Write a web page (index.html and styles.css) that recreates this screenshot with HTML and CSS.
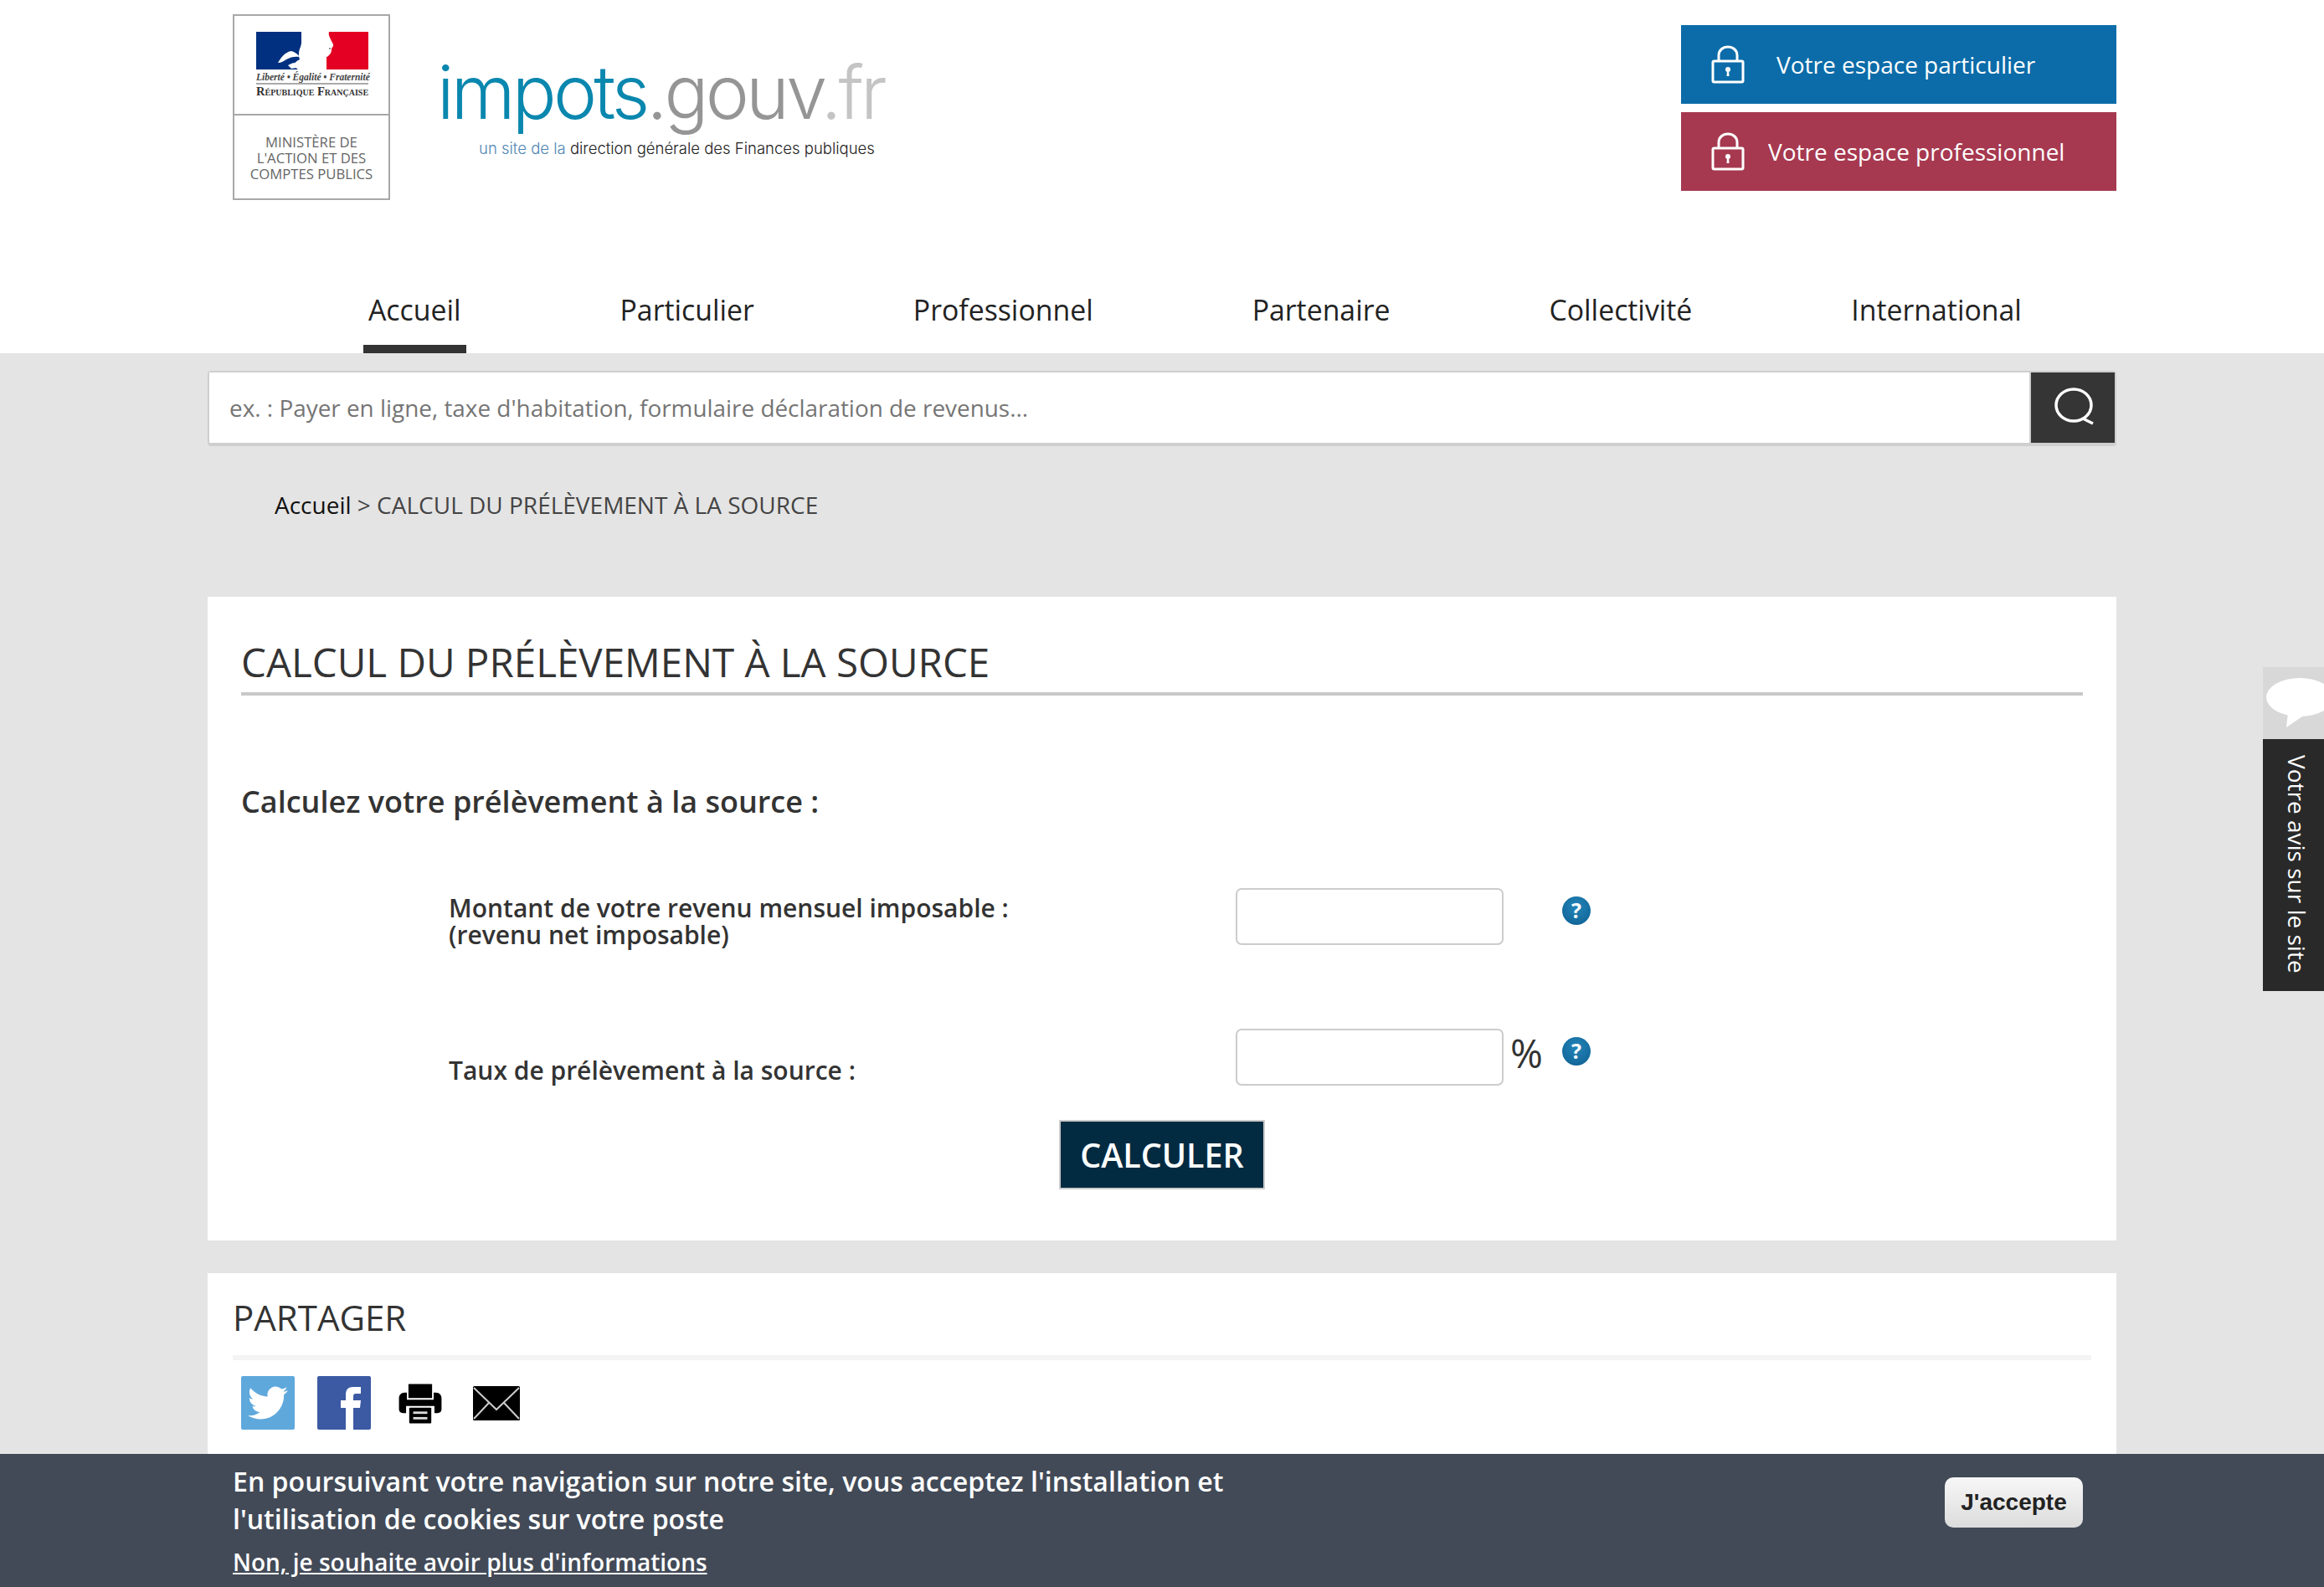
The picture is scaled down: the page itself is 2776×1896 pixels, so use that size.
FILE: index.html
```html
<!DOCTYPE html>
<html lang="fr">
<head>
    <meta charset="UTF-8">
    <title>Calcul du prélèvement à la source</title>
    <link rel="stylesheet" href="styles.css">
</head>
<body>

    <!-- Header -->
    <header class="top">
        <div class="wrap">
            <div class="top-row">
                <div class="marianne">
                    <div class="marianne-flag">
                        <svg class="flag" viewBox="0 0 134 45" width="134" height="45">
                            <rect x="0" y="0" width="134" height="45" fill="#fff"/>
                            <rect x="0" y="0" width="54" height="45" fill="#00307f"/>
                            <rect x="84" y="0" width="50" height="45" fill="#e30022"/>
                            <path d="M56 0H87C86 4 88 6 89 9C90 12 93 15 92 17C91 19 90 19 90 21C90 24 89 26 87 28C85 30 82 31 80 35C78 38 77 41 76 45H50C46 42 42 38 52 33C50 28 51 22 53 18C55 12 54 6 56 0Z" fill="#fff"/>
                            <path d="M26 37C30 30 35 24 42 23C46 24 50 27 52 30C47 29 41 30 36 33C33 35 30 37 26 37ZM38 40C42 37 48 36 53 37L55 42L42 44Z" fill="#fff"/>
                            <path d="M28 26L36 22M34 36L50 33" stroke="#00307f" stroke-width="1.5"/>
                            <circle cx="88" cy="20" r="1" fill="#777"/>
                        </svg>
                        <div class="devise">Liberté • Égalité • Fraternité</div>
                        <div class="republique">République Française</div>
                    </div>
                    <div class="ministere">MINISTÈRE DE<br>L'ACTION ET DES<br>COMPTES PUBLICS</div>
                </div>

                <div class="brand">
                    <div class="brand-name"><span class="b-blue">impots</span><span class="b-grey">.gouv</span><span class="b-light">.fr</span></div>
                    <div class="brand-sub"><span class="b-sub">un site de la</span> direction générale des Finances publiques</div>
                </div>

                <div class="espaces">
                    <a class="espace espace-part" href="#">
                        <svg class="lock" viewBox="0 0 40 46" width="40" height="46"><path d="M9 19V12C9 6 14 2 20 2C26 2 31 6 31 12V19" fill="none" stroke="#fff" stroke-width="3"/><rect x="2" y="19" width="36" height="25" rx="1.5" fill="none" stroke="#fff" stroke-width="3"/><circle cx="20" cy="29" r="3" fill="#fff"/><path d="M19 30H21L21.5 37H18.5Z" fill="#fff"/></svg>
                        <span>Votre espace particulier</span>
                    </a>
                    <a class="espace espace-pro" href="#">
                        <svg class="lock" viewBox="0 0 40 46" width="40" height="46"><path d="M9 19V12C9 6 14 2 20 2C26 2 31 6 31 12V19" fill="none" stroke="#fff" stroke-width="3"/><rect x="2" y="19" width="36" height="25" rx="1.5" fill="none" stroke="#fff" stroke-width="3"/><circle cx="20" cy="29" r="3" fill="#fff"/><path d="M19 30H21L21.5 37H18.5Z" fill="#fff"/></svg>
                        <span>Votre espace professionnel</span>
                    </a>
                </div>
            </div>

            <nav class="nav">
                <a class="nav-item active" href="#">Accueil</a>
                <a class="nav-item" href="#">Particulier</a>
                <a class="nav-item" href="#">Professionnel</a>
                <a class="nav-item" href="#">Partenaire</a>
                <a class="nav-item" href="#">Collectivité</a>
                <a class="nav-item" href="#">International</a>
            </nav>
        </div>
    </header>

    <main class="wrap">
        <!-- Search -->
        <form class="search">
            <input class="search-input" type="text" placeholder="ex. : Payer en ligne, taxe d'habitation, formulaire déclaration de revenus...">
            <button class="search-btn" type="button">
                <svg viewBox="0 0 50 48" width="50" height="48"><ellipse cx="24" cy="22" rx="21" ry="19" fill="none" stroke="#fff" stroke-width="3.5"/><path d="M35 38L47 44" stroke="#fff" stroke-width="3.5"/></svg>
            </button>
        </form>

        <div class="crumbs"><a href="#">Accueil</a> &gt; CALCUL DU PRÉLÈVEMENT À LA SOURCE</div>

        <!-- Calculator -->
        <section class="card calc">
            <h1 class="calc-title">CALCUL DU PRÉLÈVEMENT À LA SOURCE</h1>
            <h2 class="calc-sub">Calculez votre prélèvement à la source :</h2>

            <div class="row row-first">
                <label class="row-label">Montant de votre revenu mensuel imposable :<br>(revenu net imposable)</label>
                <input class="row-input" type="text">
                <span class="unit"></span>
                <span class="help">?</span>
            </div>
            <div class="row row-second">
                <label class="row-label row-label-low">Taux de prélèvement à la source :</label>
                <input class="row-input" type="text">
                <span class="unit">%</span>
                <span class="help">?</span>
            </div>
            <div class="calc-action">
                <button class="calc-btn" type="button">CALCULER</button>
            </div>
        </section>

        <!-- Share -->
        <section class="card share">
            <h2 class="share-title">PARTAGER</h2>
            <div class="share-icons">
                <svg class="share-icon" viewBox="0 0 64 64" width="64" height="64"><rect width="64" height="64" rx="2" fill="#5fa8dc"/><path transform="translate(8 8) scale(2)" d="M23.95 4.57a10 10 0 0 1-2.82.77 4.96 4.96 0 0 0 2.16-2.72c-.95.55-2 .96-3.12 1.19a4.92 4.92 0 0 0-8.38 4.48C7.69 8.1 4.07 6.13 1.64 3.16a4.82 4.82 0 0 0-.67 2.48c0 1.71.87 3.2 2.19 4.1a4.9 4.9 0 0 1-2.23-.62v.06a4.92 4.92 0 0 0 3.95 4.83 5 5 0 0 1-2.21.08 4.94 4.94 0 0 0 4.6 3.42A9.87 9.87 0 0 1 0 19.54a14 14 0 0 0 7.56 2.21c9.05 0 14-7.5 14-13.98 0-.21 0-.42-.02-.63a9.94 9.94 0 0 0 2.46-2.55z" fill="#fff"/></svg>
                <svg class="share-icon" viewBox="0 0 64 64" width="64" height="64"><rect width="64" height="64" rx="2" fill="#3b5aa3"/><path d="M34 64V38H28V29H34V22C34 16 37 13 43 13H52V21H46C44 21 43 22 43 24V29H52L51 38H43V64Z" fill="#fff"/></svg>
                <svg class="share-icon" viewBox="-2 -2 68 68" width="64" height="64"><rect x="17" y="8" width="30" height="18" rx="1" fill="#000"/><path d="M12 19H15V28H49V19H52C56 19 59 22 59 26V40C59 43 57 45 54 45H50V36H14V45H10C7 45 5 43 5 40V26C5 22 8 19 12 19Z" fill="#000"/><rect x="18" y="38" width="28" height="20" rx="1" fill="#000"/><rect x="23" y="43" width="18" height="3" fill="#ddd"/><rect x="23" y="50" width="18" height="3" fill="#ddd"/></svg>
                <svg class="share-icon" viewBox="0 0 64 64" width="64" height="64"><rect x="4" y="12" width="56" height="41" rx="1.5" fill="#000"/><path d="M5 14L32 40L59 14M5 51L23 32M59 51L41 32" fill="none" stroke="#ccc" stroke-width="2"/></svg>
            </div>
        </section>
    </main>

    <!-- Feedback tab -->
    <aside class="avis">
        <div class="avis-bubble">
            <svg viewBox="0 0 73 66" width="73" height="66"><ellipse cx="44" cy="26" rx="40" ry="23" fill="#fff"/><path d="M30 44L28 62L50 47Z" fill="#fff"/></svg>
        </div>
        <div class="avis-label"><span>Votre avis sur le site</span></div>
    </aside>

    <!-- Cookie banner -->
    <div class="cookies">
        <div class="cookies-text">
            <p class="cookies-msg">En poursuivant votre navigation sur notre site, vous acceptez l'installation et<br>l'utilisation de cookies sur votre poste</p>
            <a class="cookies-link" href="#">Non, je souhaite avoir plus d'informations</a>
        </div>
        <button class="cookies-btn" type="button">J'accepte</button>
    </div>

</body>
</html>
```
FILE: styles.css
```css
html, body {
    margin: 0;
    height: 1896px;
    overflow: hidden;
}
body {
    background: #e4e4e4;
    font-family: 'Open Sans', sans-serif;
    color: #333;
}
a {
    color: inherit;
    text-decoration: none;
}
.wrap {
    width: 2280px;
    margin: 0 auto;
}

/* Header */
.top {
    background: white;
    height: 422px;
}
.top-row {
    display: flex;
    height: 310px;
    padding: 17px 0 0 30px;
    box-sizing: border-box;
}
.marianne {
    width: 188px;
    height: 222px;
    border: 2px solid #a8a8a8;
    box-sizing: border-box;
    text-align: center;
}
.marianne-flag {
    height: 119px;
    border-bottom: 2px solid #a8a8a8;
    padding: 19px 0 0 26px;
    text-align: left;
    box-sizing: border-box;
}
.flag {
    display: block;
}
.devise {
    width: 134px;
    font-family: 'Liberation Serif', serif;
    font-style: italic;
    font-weight: bold;
    font-size: 11.5px;
    line-height: 14px;
    margin-top: 2px;
    white-space: nowrap;
    border-bottom: 2px solid #aaa;
    color: #444;
}
.republique {
    font-family: 'Liberation Serif', serif;
    font-weight: bold;
    font-variant: small-caps;
    font-size: 14.5px;
    line-height: 16px;
    color: #333;
    white-space: nowrap;
}
.ministere {
    margin-top: 22px;
    font-size: 16.7px;
    line-height: 19px;
    color: #666;
    white-space: nowrap;
}
.brand {
    margin-left: 56px;
    width: 560px;
    padding-top: 45px;
}
.brand-name {
    font-family: 'Inter', sans-serif;
    font-weight: 300;
    font-size: 88px;
    line-height: 96px;
    letter-spacing: -3.8px;
    white-space: nowrap;
}
.b-blue { color: #0a87ae; }
.b-grey { color: #959595; }
.b-light { color: #c4c4c4; }
.brand-sub {
    margin: 8px 0 0 50px;
    font-family: 'Inter', sans-serif;
    font-weight: 300;
    font-size: 18.5px;
    color: #222;
    white-space: nowrap;
}
.b-sub { color: #4f86b3; }
.espaces {
    margin-left: auto;
    width: 520px;
    padding-top: 13px;
}
.espace {
    display: flex;
    align-items: center;
    height: 94px;
    margin-bottom: 10px;
    color: white;
    font-size: 28px;
    padding-left: 36px;
    box-sizing: border-box;
}
.espace-part {
    background: #0c6ca9;
}
.espace-part span {
    margin-left: 38px;
}
.espace-pro {
    background: #a63950;
}
.espace-pro span {
    margin-left: 28px;
}

/* Nav */
.nav {
    display: flex;
    gap: 178px;
    padding-left: 186px;
    height: 112px;
    box-sizing: border-box;
}
.nav-item {
    padding: 37px 6px 0;
    height: 112px;
    box-sizing: border-box;
    font-size: 33.8px;
    color: #222;
    white-space: nowrap;
}
.nav-item.active {
    border-bottom: 10px solid #333;
}

/* Search */
.search {
    display: flex;
    margin-top: 21px;
    height: 90px;
    background: #cfcfcf;
    padding: 2px 2px 4px 2px;
    box-sizing: border-box;
    border-radius: 4px;
}
.search-input {
    flex: 1;
    border: none;
    padding: 0 24px;
    font-family: 'Open Sans', sans-serif;
    font-size: 27.9px;
    outline: none;
    background: white;
}
.search-input::placeholder {
    color: #757575;
    opacity: 1;
}
.search-btn {
    width: 100px;
    margin-left: 2px;
    background: #353535;
    border: none;
    padding: 0 0 3px 4px;
    display: flex;
    align-items: center;
    justify-content: center;
}
.crumbs {
    padding: 48px 0 0 80px;
    height: 180px;
    box-sizing: border-box;
    font-size: 28px;
    line-height: 44px;
    color: #444;
}
.crumbs a {
    color: #111;
}

/* Cards */
.card {
    background: white;
}
.calc {
    height: 769px;
    padding: 40px 40px 0;
    box-sizing: border-box;
}
.calc-title {
    margin: 0;
    height: 74px;
    border-bottom: 4px solid #c8c8c8;
    box-sizing: content-box;
    font-size: 47.5px;
    line-height: 76px;
    font-weight: 400;
    color: #333;
}
.calc-sub {
    margin: 102px 0 0;
    font-size: 36px;
    line-height: 50px;
    font-weight: 600;
    color: #333;
}
.row {
    display: grid;
    grid-template-columns: 940px 320px 70px 34px;
    padding-left: 248px;
    align-items: start;
}
.row-first {
    margin-top: 78px;
}
.row-second {
    margin-top: 96px;
}
.row-label {
    font-size: 30px;
    line-height: 32px;
    font-weight: 600;
    color: #333;
    padding-top: 8px;
}
.row-label-low {
    padding-top: 34px;
}
.row-input {
    width: 320px;
    height: 68px;
    box-sizing: border-box;
    border: 2px solid #ccc;
    border-radius: 7px;
    background: white;
}
.unit {
    padding: 0 0 0 8px;
    font-size: 47px;
    font-weight: 500;
    line-height: 52px;
    margin-top: 3px;
    color: #333;
}
.help {
    width: 34px;
    height: 34px;
    margin-top: 10px;
    border-radius: 50%;
    background: radial-gradient(circle at 50% 35%, #2385b8, #146a9d 70%, #0d5480);
    color: white;
    font-size: 25px;
    font-weight: 700;
    line-height: 33px;
    text-align: center;
}
.calc-action {
    margin-top: 41px;
    display: flex;
    justify-content: center;
}
.calc-btn {
    width: 246px;
    height: 83px;
    background: #022b42;
    border: 2px solid #ccc;
    color: white;
    font-family: 'Open Sans', sans-serif;
    font-size: 39.5px;
    font-weight: 600;
    padding: 0;
}
.share {
    margin-top: 39px;
    height: 400px;
    padding: 23px 30px 0;
    box-sizing: border-box;
}
.share-title {
    margin: 0;
    height: 75px;
    border-bottom: 6px solid #f4f4f4;
    box-sizing: content-box;
    font-size: 42px;
    line-height: 60px;
    font-weight: 400;
    color: #333;
}
.share-icons {
    display: flex;
    gap: 27px;
    padding: 19px 0 0 10px;
}
.share-icon {
    display: block;
}

/* Feedback tab */
.avis {
    position: fixed;
    top: 797px;
    right: 0;
    width: 73px;
}
.avis-bubble {
    height: 86px;
    background: #d8d8d8;
    padding-top: 10px;
    box-sizing: border-box;
    overflow: hidden;
}
.avis-bubble svg {
    display: block;
}
.avis-label {
    height: 301px;
    background: #292929;
    color: white;
    font-size: 28px;
    display: flex;
    justify-content: center;
    padding: 19px 0 0 8px;
    box-sizing: border-box;
}
.avis-label span {
    writing-mode: vertical-rl;
    white-space: nowrap;
}

/* Cookie banner */
.cookies {
    position: fixed;
    left: 0;
    right: 0;
    bottom: 0;
    height: 159px;
    background: #424a57;
    color: white;
    display: flex;
    justify-content: space-between;
    padding: 10px 288px 0 278px;
    box-sizing: border-box;
}
.cookies-msg {
    margin: 0;
    font-size: 32.1px;
    line-height: 45px;
    font-weight: 600;
}
.cookies-link {
    display: block;
    margin-top: 9px;
    font-size: 28px;
    line-height: 40px;
    font-weight: 600;
    text-decoration: underline;
}
.cookies-btn {
    align-self: flex-start;
    width: 165px;
    height: 60px;
    margin-top: 18px;
    background: linear-gradient(#f7f7f7, #dcdcdc);
    border: none;
    border-radius: 10px;
    color: #222;
    font-family: 'Liberation Sans', sans-serif;
    font-size: 28px;
    font-weight: bold;
    padding: 0;
}
```
